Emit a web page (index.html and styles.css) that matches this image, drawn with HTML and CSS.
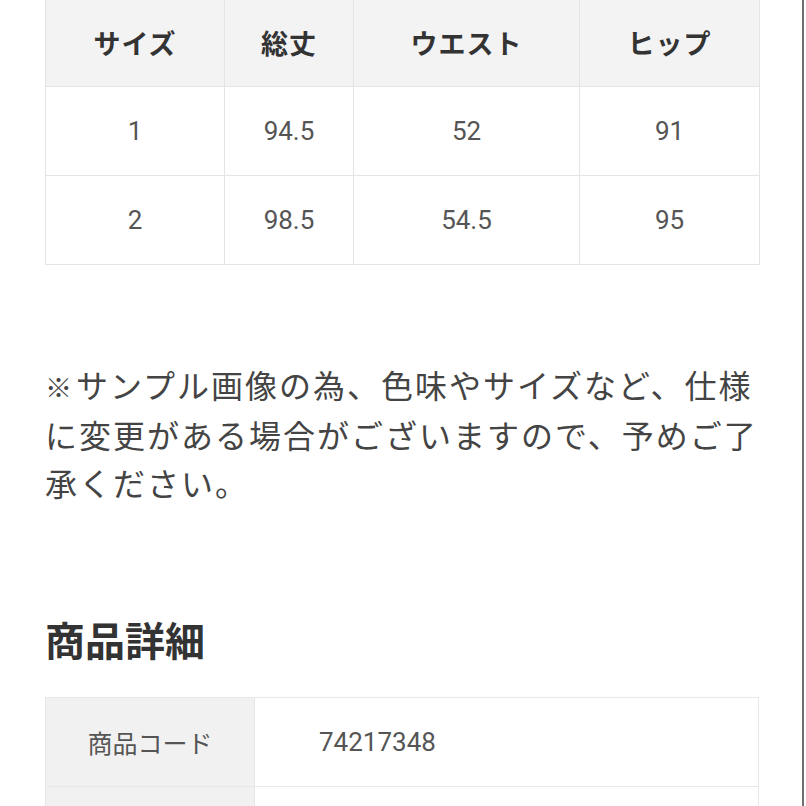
FILE: index.html
```html
<!DOCTYPE html>
<html lang="ja">
<head>
<meta charset="utf-8">
<link rel="stylesheet" href="styles.css">
</head>
<body>
<div class="page">
  <table class="size-table">
    <colgroup>
      <col class="c1"><col class="c2"><col class="c3"><col class="c4">
    </colgroup>
    <thead>
      <tr><th>サイズ</th><th>総丈</th><th>ウエスト</th><th>ヒップ</th></tr>
    </thead>
    <tbody>
      <tr><td>1</td><td>94.5</td><td>52</td><td>91</td></tr>
      <tr><td>2</td><td>98.5</td><td>54.5</td><td>95</td></tr>
    </tbody>
  </table>

  <p class="note"><span class="mark">※</span>サンプル画像の為、色味やサイズなど、仕様<br>に変更がある場合がございますので、予めご了<br>承ください。</p>

  <h2 class="heading">商品詳細</h2>

  <table class="detail-table">
    <tr><th>商品コード</th><td>74217348</td></tr>
    <tr><th>&nbsp;</th><td>&nbsp;</td></tr>
  </table>
</div>
</body>
</html>
```
FILE: styles.css
```css
html, body {
  margin: 0;
  padding: 0;
  background: #ffffff;
  overflow: hidden;
}
body {
  width: 806px;
  height: 806px;
  font-family: Roboto, "Noto Sans CJK JP", sans-serif;
}
.page {
  box-sizing: border-box;
  width: 804px;
  height: 806px;
  border-right: 2px solid #6f6f6f;
  padding-left: 45px;
  overflow: hidden;
}
.size-table {
  border-collapse: collapse;
  width: 714px;
  margin-top: -3px;
  table-layout: fixed;
}
.c1 { width: 179px; }
.c2 { width: 129px; }
.c3 { width: 226px; }
.c4 { width: 180px; }
.size-table th,
.size-table td {
  border: 1px solid #e4e4e4;
  height: 88px;
  padding: 0;
  text-align: center;
  vertical-align: middle;
}
.size-table th {
  background: #f3f3f3;
  color: #333333;
  font-size: 27px;
  font-weight: 700;
  letter-spacing: 1px;
}
.size-table td {
  background: #ffffff;
  color: #555555;
  font-size: 26px;
  font-weight: 400;
}
.note {
  margin: 98px 0 0 0;
  font-size: 32px;
  line-height: 48px;
  letter-spacing: 2px;
  color: #444444;
  white-space: nowrap;
}
.mark {
  font-size: 27px;
  letter-spacing: 0;
  margin-right: 4px;
}
.heading {
  margin: 106px 0 0 0;
  font-size: 40px;
  line-height: 56px;
  font-weight: 700;
  color: #333333;
}
.detail-table {
  border-collapse: collapse;
  width: 714px;
  margin-top: 26px;
  table-layout: fixed;
}
.detail-table th,
.detail-table td {
  border: 1px solid #e8e8e8;
  height: 88px;
  padding: 0;
  vertical-align: middle;
  font-size: 25px;
  color: #555555;
}
.detail-table th {
  width: 208px;
  background: #f1f1f1;
  font-weight: 400;
  text-align: center;
}
.detail-table td {
  background: #ffffff;
  padding-left: 64px;
  text-align: left;
  font-size: 26px;
}
```
